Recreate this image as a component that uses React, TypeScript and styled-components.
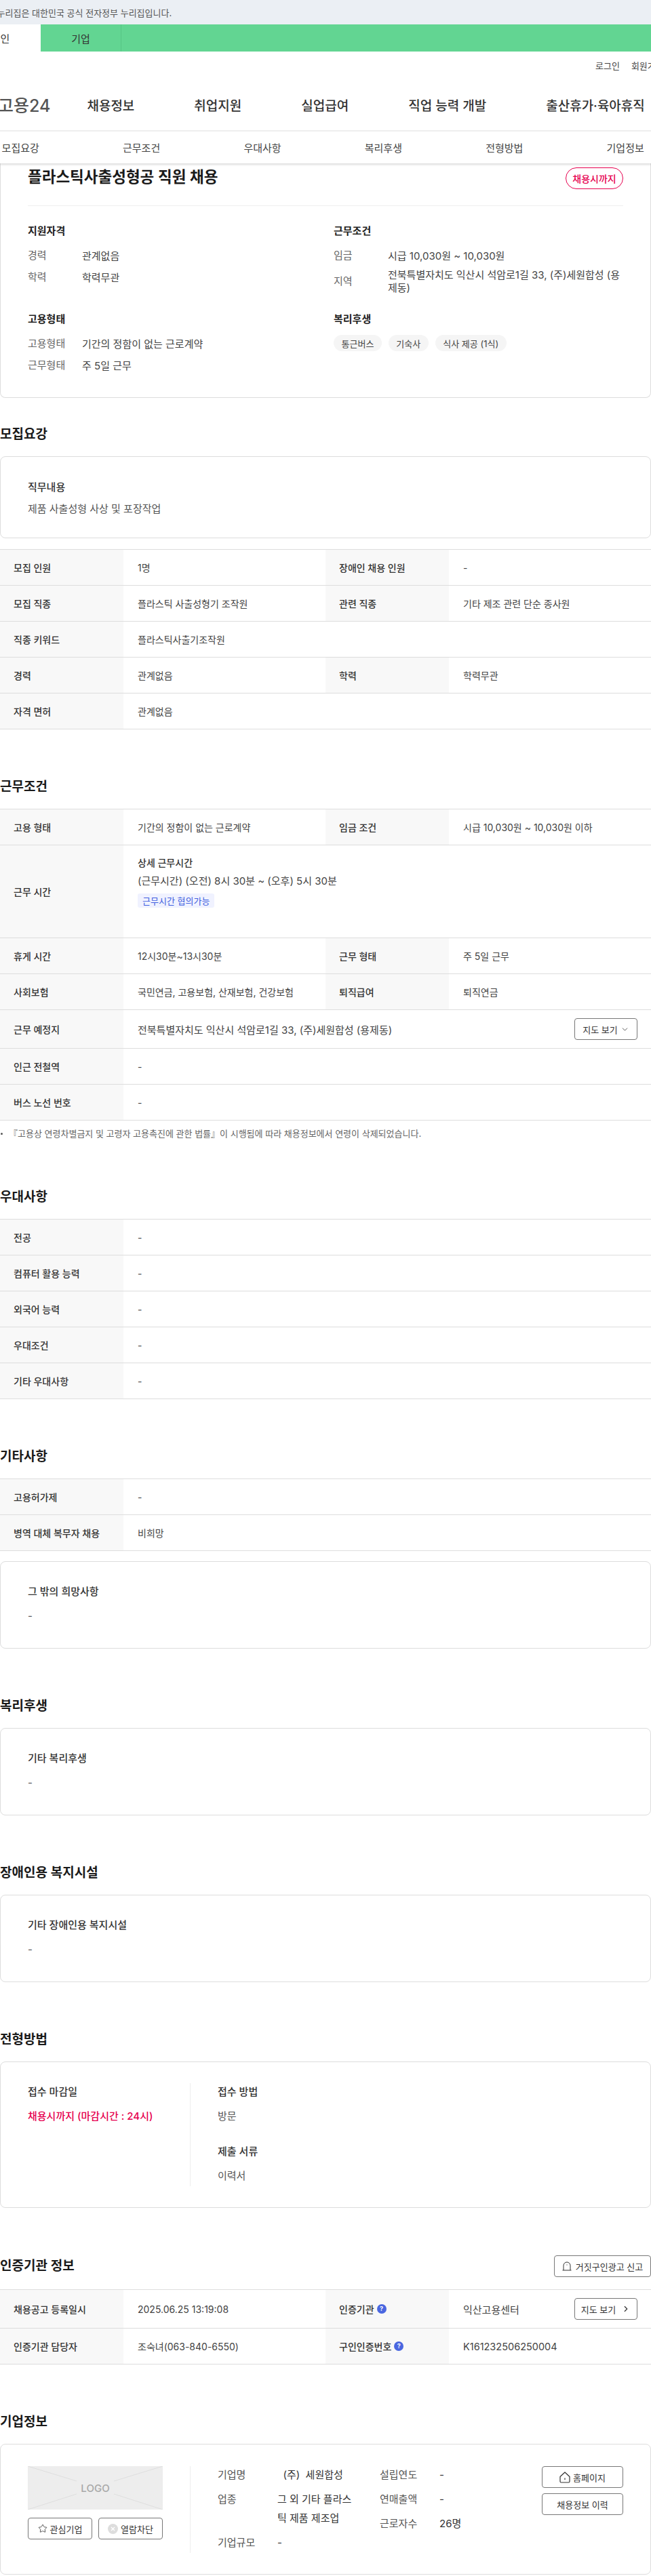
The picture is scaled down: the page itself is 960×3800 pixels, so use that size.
import React from 'react';
import styled, { createGlobalStyle } from 'styled-components';
import { ChevronDown, ChevronRight, Star } from 'lucide-react';

const GlobalStyle = createGlobalStyle`
  html, body { margin: 0; padding: 0; background: #fff; }
  * { box-sizing: border-box; }
  body { font-family: Inter, "Noto Sans CJK KR", "Noto Sans", sans-serif; color: #333; }
`;

const Page = styled.div`
  width: 960px;
  height: 3800px;
  overflow: hidden;
`;

const GovBanner = styled.div`
  height: 36px;
  background: #ebeff4;
  display: flex;
  align-items: center;
  font-size: 13px;
  color: #555;
  white-space: nowrap;
`;
const GovText = styled.span`
  margin-left: -20px;
`;

const AudienceBar = styled.div`
  height: 40px;
  background: #62d592;
  display: flex;
  margin-left: -59px;
`;
const AudienceTab = styled.div<{ $active?: boolean }>`
  width: 119px;
  display: flex;
  align-items: center;
  justify-content: center;
  font-size: 15px;
  color: #333;
  background: ${p => (p.$active ? '#fff' : 'transparent')};
  border-right: ${p => (p.$active ? 'none' : '1px solid #56c585')};
`;

const UtilBar = styled.div`
  height: 40px;
  display: flex;
  align-items: center;
  gap: 17px;
  padding-left: 878px;
  font-size: 13px;
  color: #444;
  white-space: nowrap;
`;

const MainNav = styled.div`
  height: 76px;
  display: flex;
  align-items: center;
  margin-left: -3px;
  white-space: nowrap;
`;
const Logo = styled.div`
  font-size: 25px;
  font-weight: 500;
  color: #555;
  margin-right: 54px;
`;
const NavList = styled.div`
  display: flex;
  gap: 88px;
`;
const NavItem = styled.div`
  font-size: 19px;
  font-weight: 500;
  color: #333;
`;

const SubTabs = styled.div`
  height: 49px;
  border-top: 2px solid #eee;
  display: flex;
  align-items: center;
  position: relative;
  z-index: 1;
  box-shadow: 0 2px 3px rgba(0, 0, 0, 0.14);
  background: #fff;
`;
const SubTabRow = styled.div`
  display: flex;
  margin-left: -59px;
`;
const SubTab = styled.div`
  width: 178.4px;
  text-align: center;
  font-size: 15px;
  color: #444;
`;

const Hero = styled.div`
  border: 1px solid #ddd;
  border-top: none;
  border-radius: 0 0 8px 8px;
  height: 346px;
  padding: 6px 40px 0;
`;
const HeroHead = styled.div`
  display: flex;
  justify-content: space-between;
  align-items: center;
  padding-bottom: 24px;
  border-bottom: 1px solid #eee;
`;
const HeroTitle = styled.h1`
  margin: -4px 0 0;
  font-size: 22.5px;
  line-height: 32px;
  font-weight: 600;
  color: #1a1a1a;
`;
const DeadlineBadge = styled.div`
  width: 85px;
  height: 32px;
  border: 1px solid #e6004f;
  border-radius: 16px;
  display: flex;
  align-items: center;
  justify-content: center;
  font-size: 14px;
  font-weight: 500;
  color: #e6004f;
`;
const SummaryGrid = styled.div`
  display: grid;
  grid-template-columns: 451px 1fr;
  row-gap: 27px;
  padding-top: 27px;
`;
const SummaryBlock = styled.div`
  display: flex;
  flex-direction: column;
`;
const BlockTitle = styled.div`
  font-size: 15px;
  line-height: 20px;
  font-weight: 600;
  color: #222;
  margin-bottom: 16px;
`;
const InfoRow = styled.div<{ $pull?: boolean }>`
  display: flex;
  align-items: center;
  font-size: 15px;
  line-height: 20px;
  margin-bottom: ${p => (p.$pull ? '0' : '12px')};
  margin-top: ${p => (p.$pull ? '-3px' : '0')};
  &:last-child { margin-bottom: 0; }
`;
const InfoLabel = styled.div`
  width: 80px;
  flex: none;
  color: #666;
`;
const InfoValue = styled.div`
  color: #444;
  word-break: break-all;
  line-height: 19px;
`;
const ChipRow = styled.div`
  display: flex;
  gap: 10px;
  margin-top: -3px;
`;
const Chip = styled.div`
  height: 24px;
  padding: 0 11.5px;
  border-radius: 12px;
  background: #f5f5f5;
  display: flex;
  align-items: center;
  font-size: 13px;
  color: #444;
`;

const Section = styled.section<{ $top?: number }>`
  margin-top: ${p => p.$top ?? 71}px;
`;
const SectionHead = styled.div`
  display: flex;
  justify-content: space-between;
  align-items: center;
  min-height: 28px;
  margin-bottom: 18px;
`;
const SectionTitle = styled.h2`
  margin: 0;
  font-size: 19px;
  line-height: 28px;
  font-weight: 600;
  color: #1a1a1a;
`;
const Card = styled.div<{ $pad?: string; $gapTop?: number }>`
  border: 1px solid #ddd;
  border-radius: 8px;
  padding: ${p => p.$pad ?? '34px 40px 37px'};
  margin-top: ${p => p.$gapTop ?? 0}px;
`;
const CardTitle = styled.div<{ $gap?: number }>`
  font-size: 15px;
  line-height: 20px;
  font-weight: 500;
  color: #333;
  margin-bottom: ${p => p.$gap ?? 16}px;
`;
const CardText = styled.div`
  font-size: 15px;
  line-height: 20px;
  color: #555;
`;

const Table = styled.div<{ $top?: number }>`
  border-top: 1px solid #ddd;
  margin-top: ${p => p.$top ?? 0}px;
`;
const Row = styled.div<{ $h?: number; $wide?: boolean }>`
  display: grid;
  grid-template-columns: ${p => (p.$wide ? '182px 1fr' : '182px 298px 182px 298px')};
  height: ${p => p.$h ?? 53}px;
  border-bottom: 1px solid #ddd;
  font-size: 14px;
`;
const Th = styled.div`
  background: #f8f8f8;
  padding: 0 20px;
  display: flex;
  align-items: center;
  gap: 4px;
  font-weight: 500;
  color: #333;
  white-space: nowrap;
`;
const Td = styled.div<{ $size?: number }>`
  padding: 0 20px 0 21px;
  display: flex;
  align-items: center;
  justify-content: space-between;
  font-size: ${p => p.$size ?? 14}px;
  color: #444;
  white-space: nowrap;
`;
const HoursCell = styled.div`
  padding: 16px 20px 0 21px;
  display: flex;
  flex-direction: column;
  align-items: flex-start;
  line-height: 20px;
  color: #444;
`;
const HoursTitle = styled.div`
  font-weight: 500;
  color: #333;
  margin-bottom: 7px;
`;
const HoursLine = styled.div`
  font-size: 15px;
`;
const HoursBadge = styled.div`
  margin-top: 8px;
  height: 21px;
  padding: 0 7px;
  border-radius: 3px;
  background: #f0f2ff;
  color: #3f5fe0;
  font-size: 13px;
  display: flex;
  align-items: center;
`;
const HelpIcon = styled.span`
  width: 14px;
  height: 14px;
  border-radius: 50%;
  background: #4a67e0;
  color: #fff;
  font-size: 9px;
  font-weight: 700;
  line-height: 14px;
  text-align: center;
`;
const OutlineButton = styled.button<{ $w?: number; $gap?: number }>`
  width: ${p => p.$w ?? 93}px;
  height: 32px;
  flex: none;
  padding: 0;
  background: #fff;
  border: 1px solid #777;
  border-radius: 4px;
  display: flex;
  align-items: center;
  justify-content: center;
  gap: ${p => p.$gap ?? 4}px;
  font-family: inherit;
  font-size: 13px;
  color: #333;
  white-space: nowrap;
`;
const FootNote = styled.div`
  margin: 10px 0 2px;
  display: flex;
  align-items: center;
  font-size: 13px;
  line-height: 18px;
  color: #666;
  white-space: nowrap;
`;
const Bullet = styled.span`
  width: 3px;
  height: 3px;
  margin: 0 9px 0 1px;
  border-radius: 50%;
  background: #555;
`;

const ApplyLayout = styled.div`
  display: flex;
`;
const ApplyLeft = styled.div`
  width: 239px;
  padding-top: 3px;
`;
const ApplyRight = styled.div`
  flex: 1;
  border-left: 1px solid #eee;
  padding: 3px 0 5px 40px;
`;
const DeadlineText = styled.div`
  font-size: 15px;
  line-height: 20px;
  font-weight: 500;
  color: #e6004f;
`;
const ApplyGap = styled.div`
  height: 32px;
`;

const CompanyCard = styled.div`
  border: 1px solid #ddd;
  border-radius: 8px;
  padding: 32px 40px 31px;
  display: flex;
`;
const CompanyLeft = styled.div`
  width: 239px;
  flex: none;
`;
const LogoBox = styled.div`
  position: relative;
  width: 199px;
  height: 64px;
  background: #ededed;
  display: flex;
  align-items: center;
  justify-content: center;
  font-size: 15px;
  font-weight: 500;
  color: #a8a8a8;
`;
const LogoLines = styled.svg`
  position: absolute;
  inset: 0;
`;
const CompanyActions = styled.div`
  display: flex;
  gap: 9px;
  margin-top: 12px;
`;
const CompanyBody = styled.div`
  flex: 1;
  height: 128px;
  border-left: 1px solid #eee;
  padding-left: 40px;
  display: flex;
`;
const FactColumn = styled.div<{ $w: number }>`
  width: ${p => p.$w}px;
  flex: none;
  display: flex;
  flex-direction: column;
  gap: 8px;
  margin-top: -1px;
`;
const Fact = styled.div`
  display: flex;
  font-size: 15px;
  line-height: 28px;
`;
const FactLabel = styled.div`
  width: 88px;
  flex: none;
  color: #555;
`;
const FactValue = styled.div`
  width: 111px;
  color: #333;
  word-break: break-all;
  white-space: pre-wrap;
`;
const LinkColumn = styled.div`
  margin-left: auto;
  display: flex;
  flex-direction: column;
  gap: 8px;
`;

const DomeIcon = () => (
  <svg width="14" height="14" viewBox="0 0 14 14" fill="none" stroke="#333" strokeWidth="1">
    <path d="M0.5 13H13.5M2 13V6a5 5 0 0 1 10 0V13" />
    <path d="M7 4.5V5.5" />
  </svg>
);
const HomeIcon = () => (
  <svg width="16" height="17" viewBox="0 0 16 17" fill="none" stroke="#333" strokeWidth="1.2" strokeLinejoin="round">
    <path d="M1 7.5L8 1l7 6.5V14.5a1.5 1.5 0 0 1-1.5 1.5h-11A1.5 1.5 0 0 1 1 14.5z" />
    <path d="M8 9.5v2.5" />
  </svg>
);
const BlockIcon = () => (
  <svg width="15" height="15" viewBox="0 0 15 15">
    <circle cx="7.5" cy="7.5" r="7.5" fill="#ddd" />
    <path d="M5 5l5 5M10 5l-5 5" stroke="#fff" strokeWidth="1.4" />
  </svg>
);

const Placeholder = () => (
  <LogoBox>
    <LogoLines width="199" height="64" viewBox="0 0 199 64" stroke="#dedede" strokeWidth="1">
      <path d="M0 0L72 22M0 64L72 41M199 0L127 22M199 64L127 41" />
    </LogoLines>
    LOGO
  </LogoBox>
);

const sectionTabs = ['모집요강', '근무조건', '우대사항', '복리후생', '전형방법', '기업정보'];
const navItems = ['채용정보', '취업지원', '실업급여', '직업 능력 개발', '출산휴가·육아휴직'];

const App: React.FC = () => (
  <Page>
    <GlobalStyle />
    <GovBanner><GovText>이 누리집은 대한민국 공식 전자정부 누리집입니다.</GovText></GovBanner>
    <AudienceBar>
      <AudienceTab $active>개인</AudienceTab>
      <AudienceTab>기업</AudienceTab>
    </AudienceBar>
    <UtilBar><span>로그인</span><span>회원가입</span></UtilBar>
    <MainNav>
      <Logo>고용24</Logo>
      <NavList>{navItems.map(n => <NavItem key={n}>{n}</NavItem>)}</NavList>
    </MainNav>
    <SubTabs>
      <SubTabRow>{sectionTabs.map(t => <SubTab key={t}>{t}</SubTab>)}</SubTabRow>
    </SubTabs>

    <Hero>
      <HeroHead>
        <HeroTitle>플라스틱사출성형공 직원 채용</HeroTitle>
        <DeadlineBadge>채용시까지</DeadlineBadge>
      </HeroHead>
      <SummaryGrid>
        <SummaryBlock>
          <BlockTitle>지원자격</BlockTitle>
          <InfoRow><InfoLabel>경력</InfoLabel><InfoValue>관계없음</InfoValue></InfoRow>
          <InfoRow><InfoLabel>학력</InfoLabel><InfoValue>학력무관</InfoValue></InfoRow>
        </SummaryBlock>
        <SummaryBlock>
          <BlockTitle>근무조건</BlockTitle>
          <InfoRow><InfoLabel>임금</InfoLabel><InfoValue>시급 10,030원 ~ 10,030원</InfoValue></InfoRow>
          <InfoRow $pull><InfoLabel>지역</InfoLabel><InfoValue>전북특별자치도 익산시 석암로1길 33, (주)세원합성 (용제동)</InfoValue></InfoRow>
        </SummaryBlock>
        <SummaryBlock>
          <BlockTitle>고용형태</BlockTitle>
          <InfoRow><InfoLabel>고용형태</InfoLabel><InfoValue>기간의 정함이 없는 근로계약</InfoValue></InfoRow>
          <InfoRow><InfoLabel>근무형태</InfoLabel><InfoValue>주 5일 근무</InfoValue></InfoRow>
        </SummaryBlock>
        <SummaryBlock>
          <BlockTitle>복리후생</BlockTitle>
          <ChipRow><Chip>통근버스</Chip><Chip>기숙사</Chip><Chip>식사 제공 (1식)</Chip></ChipRow>
        </SummaryBlock>
      </SummaryGrid>
    </Hero>

    <Section $top={40}>
      <SectionHead><SectionTitle>모집요강</SectionTitle></SectionHead>
      <Card $pad="35px 40px 32px">
        <CardTitle $gap={12}>직무내용</CardTitle>
        <CardText>제품 사출성형 사상 및 포장작업</CardText>
      </Card>
      <Table $top={16}>
        <Row><Th>모집 인원</Th><Td>1명</Td><Th>장애인 채용 인원</Th><Td>-</Td></Row>
        <Row><Th>모집 직종</Th><Td>플라스틱 사출성형기 조작원</Td><Th>관련 직종</Th><Td>기타 제조 관련 단순 종사원</Td></Row>
        <Row $wide><Th>직종 키워드</Th><Td>플라스틱사출기조작원</Td></Row>
        <Row><Th>경력</Th><Td>관계없음</Td><Th>학력</Th><Td>학력무관</Td></Row>
        <Row $wide><Th>자격 면허</Th><Td>관계없음</Td></Row>
      </Table>
    </Section>

    <Section>
      <SectionHead><SectionTitle>근무조건</SectionTitle></SectionHead>
      <Table>
        <Row><Th>고용 형태</Th><Td>기간의 정함이 없는 근로계약</Td><Th>임금 조건</Th><Td>시급 10,030원 ~ 10,030원 이하</Td></Row>
        <Row $wide $h={137}>
          <Th>근무 시간</Th>
          <HoursCell>
            <HoursTitle>상세 근무시간</HoursTitle>
            <HoursLine>(근무시간) (오전) 8시 30분 ~ (오후) 5시 30분</HoursLine>
            <HoursBadge>근무시간 협의가능</HoursBadge>
          </HoursCell>
        </Row>
        <Row><Th>휴게 시간</Th><Td>12시30분~13시30분</Td><Th>근무 형태</Th><Td>주 5일 근무</Td></Row>
        <Row><Th>사회보험</Th><Td>국민연금, 고용보험, 산재보험, 건강보험</Td><Th>퇴직급여</Th><Td>퇴직연금</Td></Row>
        <Row $wide $h={57}>
          <Th>근무 예정지</Th>
          <Td $size={15}>
            전북특별자치도 익산시 석암로1길 33, (주)세원합성 (용제동)
            <OutlineButton>지도 보기 <ChevronDown size={13} strokeWidth={1.5} /></OutlineButton>
          </Td>
        </Row>
        <Row $wide><Th>인근 전철역</Th><Td>-</Td></Row>
        <Row $wide><Th>버스 노선 번호</Th><Td>-</Td></Row>
      </Table>
      <FootNote><Bullet />『고용상 연령차별금지 및 고령자 고용촉진에 관한 법률』이 시행됨에 따라 채용정보에서 연령이 삭제되었습니다.</FootNote>
    </Section>

    <Section>
      <SectionHead><SectionTitle>우대사항</SectionTitle></SectionHead>
      <Table>
        <Row $wide><Th>전공</Th><Td>-</Td></Row>
        <Row $wide><Th>컴퓨터 활용 능력</Th><Td>-</Td></Row>
        <Row $wide><Th>외국어 능력</Th><Td>-</Td></Row>
        <Row $wide><Th>우대조건</Th><Td>-</Td></Row>
        <Row $wide><Th>기타 우대사항</Th><Td>-</Td></Row>
      </Table>
    </Section>

    <Section>
      <SectionHead><SectionTitle>기타사항</SectionTitle></SectionHead>
      <Table>
        <Row $wide><Th>고용허가제</Th><Td>-</Td></Row>
        <Row $wide><Th>병역 대체 복무자 채용</Th><Td>비희망</Td></Row>
      </Table>
      <Card $gapTop={15}>
        <CardTitle>그 밖의 희망사항</CardTitle>
        <CardText>-</CardText>
      </Card>
    </Section>

    <Section>
      <SectionHead><SectionTitle>복리후생</SectionTitle></SectionHead>
      <Card>
        <CardTitle>기타 복리후생</CardTitle>
        <CardText>-</CardText>
      </Card>
    </Section>

    <Section>
      <SectionHead><SectionTitle>장애인용 복지시설</SectionTitle></SectionHead>
      <Card>
        <CardTitle>기타 장애인용 복지시설</CardTitle>
        <CardText>-</CardText>
      </Card>
    </Section>

    <Section>
      <SectionHead><SectionTitle>전형방법</SectionTitle></SectionHead>
      <Card $pad="31px 40px">
        <ApplyLayout>
          <ApplyLeft>
            <CardTitle>접수 마감일</CardTitle>
            <DeadlineText>채용시까지 (마감시간 : 24시)</DeadlineText>
          </ApplyLeft>
          <ApplyRight>
            <CardTitle>접수 방법</CardTitle>
            <CardText>방문</CardText>
            <ApplyGap />
            <CardTitle>제출 서류</CardTitle>
            <CardText>이력서</CardText>
          </ApplyRight>
        </ApplyLayout>
      </Card>
    </Section>

    <Section $top={70}>
      <SectionHead>
        <SectionTitle>인증기관 정보</SectionTitle>
        <OutlineButton $w={143} $gap={6}><DomeIcon />거짓구인광고 신고</OutlineButton>
      </SectionHead>
      <Table>
        <Row $h={57}>
          <Th>채용공고 등록일시</Th>
          <Td>2025.06.25 13:19:08</Td>
          <Th>인증기관 <HelpIcon>?</HelpIcon></Th>
          <Td $size={15}>
            익산고용센터
            <OutlineButton $gap={8}>지도 보기 <ChevronRight size={14} strokeWidth={2} /></OutlineButton>
          </Td>
        </Row>
        <Row>
          <Th>인증기관 담당자</Th>
          <Td>조숙녀(063-840-6550)</Td>
          <Th>구인인증번호 <HelpIcon>?</HelpIcon></Th>
          <Td $size={14.5}>K161232506250004</Td>
        </Row>
      </Table>
    </Section>

    <Section>
      <SectionHead><SectionTitle>기업정보</SectionTitle></SectionHead>
      <CompanyCard>
        <CompanyLeft>
          <Placeholder />
          <CompanyActions>
            <OutlineButton $w={95}><Star size={14} strokeWidth={1.4} />관심기업</OutlineButton>
            <OutlineButton $w={95}><BlockIcon />열람차단</OutlineButton>
          </CompanyActions>
        </CompanyLeft>
        <CompanyBody>
          <FactColumn $w={239}>
            <Fact><FactLabel>기업명</FactLabel><FactValue>{'\u00a0\u00a0(주)\u00a0\u00a0세원합성'}</FactValue></Fact>
            <Fact><FactLabel>업종</FactLabel><FactValue>그 외 기타 플라스틱 제품 제조업</FactValue></Fact>
            <Fact><FactLabel>기업규모</FactLabel><FactValue>-</FactValue></Fact>
          </FactColumn>
          <FactColumn $w={180}>
            <Fact><FactLabel>설립연도</FactLabel><FactValue>-</FactValue></Fact>
            <Fact><FactLabel>연매출액</FactLabel><FactValue>-</FactValue></Fact>
            <Fact><FactLabel>근로자수</FactLabel><FactValue>26명</FactValue></Fact>
          </FactColumn>
          <LinkColumn>
            <OutlineButton $w={120}><HomeIcon />홈페이지</OutlineButton>
            <OutlineButton $w={120}>채용정보 이력</OutlineButton>
          </LinkColumn>
        </CompanyBody>
      </CompanyCard>
    </Section>
  </Page>
);

export default App;
